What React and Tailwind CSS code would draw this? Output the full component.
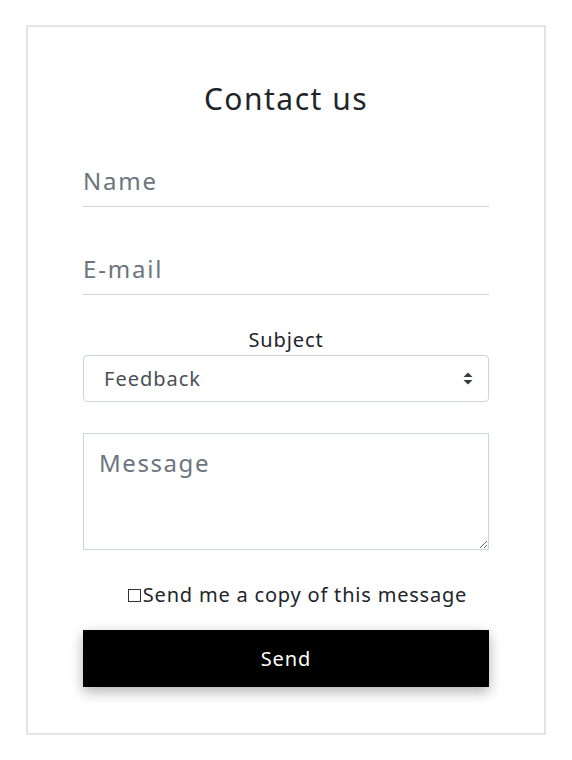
import React from 'react';

const font = { fontFamily: '"Noto Sans", "Open Sans", sans-serif' };

const App = () => {
  return (
    <div className="min-h-[760px] bg-white px-[26px] pt-[25px]" style={font}>
      <div className="border-2 border-[#e3e3e3] px-[55px] pt-[52px] pb-[44px] h-[710px]">
        <h2 className="text-center text-[30px] leading-[40px] tracking-[0.05em] text-[#212529]">Contact us</h2>

        <div className="mt-[36px] flex flex-col">
          <input
            type="text"
            placeholder="Name"
            className="h-[52px] border-b border-[#d0d3d8] text-[24px] tracking-[0.075em] text-[#212529] placeholder:text-[#6c757d] outline-none"
          />
          <input
            type="text"
            placeholder="E-mail"
            className="mt-[36px] h-[52px] border-b border-[#d0d3d8] text-[24px] tracking-[0.075em] text-[#212529] placeholder:text-[#6c757d] outline-none"
          />

          <label className="mt-[33px] text-center text-[20px] leading-[24px] tracking-[0.045em] text-[#212529]">Subject</label>
          <div className="relative mt-[3px]">
            <select className="w-full h-[47px] appearance-none rounded-[4px] border border-[#ced4da] bg-white pl-[20px] text-[20px] tracking-[0.05em] text-[#495057] outline-none">
              <option>Feedback</option>
              <option>Report a bug</option>
              <option>Feature request</option>
            </select>
            <svg
              className="pointer-events-none absolute right-[16px] top-[17px]"
              width="10"
              height="13"
              viewBox="0 0 10 13"
            >
              <path d="M5 0.5 L9.5 5 H0.5 Z" fill="#343a40" />
              <path d="M5 12.5 L9.5 8 H0.5 Z" fill="#343a40" />
            </svg>
          </div>

          <textarea
            placeholder="Message"
            className="mt-[31px] h-[117px] border border-[#ced4da] px-[15px] pt-[11px] text-[24px] tracking-[0.065em] text-[#212529] placeholder:text-[#6c757d] outline-none"
          />

          <label className="mt-[32px] flex items-center justify-center pl-[23px] text-[20px] leading-[26px] tracking-[0.04em] text-[#212529]">
            <input
              type="checkbox"
              className="mr-[2px] h-[13px] w-[13px] appearance-none border border-[#333] bg-white"
            />
            <span>Send me a copy of this message</span>
          </label>

          <button className="mt-[22px] h-[57px] w-full bg-black text-[20px] tracking-[0.045em] text-white shadow-[0_5px_11px_0_rgba(0,0,0,0.18),0_4px_15px_0_rgba(0,0,0,0.15)]">
            Send
          </button>
        </div>
      </div>
    </div>
  );
};

export default App;
